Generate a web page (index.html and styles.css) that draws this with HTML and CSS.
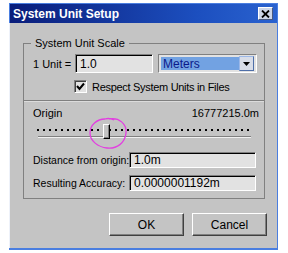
FILE: index.html
```html
<!DOCTYPE html>
<html lang="en">
<head>
    <meta charset="UTF-8">
    <title>System Unit Setup</title>
    <link rel="stylesheet" href="styles.css">
</head>
<body>

<div class="window">
    <div class="titlebar">
        <span class="title">System Unit Setup</span>
        <span class="close">
            <svg width="9" height="8" viewBox="0 0 9 8"><path d="M1 0.5 L8 7.5 M8 0.5 L1 7.5" stroke="#000" stroke-width="1.8"/></svg>
        </span>
    </div>

    <div class="content">
        <fieldset class="group">
            <legend>System Unit Scale</legend>

            <div class="unit-row">
                <span class="unit-label">1 Unit =</span>
                <div class="field unit-field">1.0</div>
                <div class="combo">
                    <span class="combo-value">Meters</span>
                    <span class="combo-arrow">
                        <svg width="7" height="4" viewBox="0 0 7 4"><polygon points="0,0 7,0 3.5,4" fill="#000"/></svg>
                    </span>
                </div>
            </div>

            <div class="check-row">
                <span class="checkbox">
                    <svg width="9" height="9" viewBox="0 0 9 9"><path d="M1 4 L3.5 7 L8 1.5" stroke="#000" stroke-width="2" fill="none"/></svg>
                </span>
                Respect System Units in Files
            </div>

            <div class="divider"></div>

            <div class="origin-row">
                <span>Origin</span>
                <span>16777215.0m</span>
            </div>

            <div class="slider">
                <div class="ticks"></div>
                <div class="track"></div>
                <div class="thumb" style="left: 66px;"></div>
            </div>

            <div class="value-row first">
                <span class="value-label">Distance from origin:</span>
                <div class="field value-field">1.0m</div>
            </div>
            <div class="value-row">
                <span class="value-label">Resulting Accuracy:</span>
                <div class="field value-field">0.0000001192m</div>
            </div>
        </fieldset>

        <div class="buttons">
            <button class="btn">OK</button>
            <button class="btn">Cancel</button>
        </div>
    </div>
</div>

<!-- hand drawn mark around the slider thumb -->
<svg class="mark" width="42" height="36" viewBox="0 0 42 36">
    <path d="M21 3 C31 1 39 8 38 17 C37 27 29 33 19 32 C10 31 2 25 2 17 C2 9 9 3 17 3 C20 2 24 3 26 4" stroke="#e23fe0" stroke-width="1.3" fill="none"/>
</svg>

</body>
</html>
```

FILE: styles.css
```css
body {
    margin: 0;
    background-color: #fff;
    font-family: "Liberation Sans", Arial, sans-serif;
    font-size: 11px;
    color: #000;
}

.window {
    margin: 3px 0 0 9px;
    width: 267px;
    border: 1px solid #4a7ee0;
    border-bottom-width: 2px;
    background-color: #c4c4c4;
}

.titlebar {
    height: 19px;
    display: flex;
    align-items: center;
    justify-content: space-between;
    padding: 0 4px 0 3px;
    background: linear-gradient(to right, #0a1d7a, #1c4fbf 70%, #2a62cf);
    color: white;
    font-size: 12px;
    font-weight: bold;
}

.close {
    width: 13px;
    height: 11px;
    display: flex;
    align-items: center;
    justify-content: center;
    background-color: #cdd6e8;
    border: 1px solid;
    border-color: #fff #4a5a80 #4a5a80 #fff;
}

.content {
    height: 225px;
    box-sizing: border-box;
    padding: 13px 12px 0 13px;
    border-left: 1px solid #eef2fa;
    margin-left: -1px;
}

/* Group box */
.group {
    margin: 0;
    width: 242px;
    box-sizing: border-box;
    padding: 4px 5px 7px 9px;
    border: 1px solid #808080;
}

.group legend {
    padding: 0 4px;
    margin-left: -2px;
    line-height: 14px;
}

.field {
    box-sizing: border-box;
    background-color: #e2e2e2;
    border: 1px solid;
    border-color: #808080 #fff #fff #808080;
    box-shadow: inset 1px 1px 0 #000;
    padding-left: 4px;
    display: flex;
    align-items: center;
    font-size: 12px;
}

.unit-row {
    display: flex;
    align-items: center;
    height: 19px;
}

.unit-label {
    width: 42px;
    white-space: nowrap;
}

.unit-field {
    width: 78px;
    height: 19px;
}

.combo {
    margin-left: 5px;
    width: 99px;
    height: 19px;
    box-sizing: border-box;
    display: flex;
    align-items: center;
    padding: 2px;
    background-color: #e2e2e2;
    border: 1px solid;
    border-color: #808080 #fff #fff #808080;
}

.combo-value {
    flex: 1;
    align-self: stretch;
    display: flex;
    align-items: center;
    padding-left: 2px;
    background-color: #72a2e2;
    color: #0c1a8a;
    font-size: 12px;
}

.combo-arrow {
    width: 13px;
    height: 13px;
    display: flex;
    align-items: center;
    justify-content: center;
    background-color: #d8dde8;
    border: 1px solid;
    border-color: #9cb8e8 #4f6fa8 #4f6fa8 #9cb8e8;
}

.check-row {
    display: flex;
    align-items: center;
    gap: 5px;
    margin-top: 7px;
    padding-left: 41px;
    height: 13px;
    white-space: nowrap;
    letter-spacing: -0.3px;
}

.checkbox {
    width: 13px;
    height: 13px;
    box-sizing: border-box;
    display: flex;
    align-items: center;
    justify-content: center;
    background-color: #e2e2e2;
    border: 1px solid;
    border-color: #808080 #fff #fff #808080;
    box-shadow: inset 1px 1px 0 #404040;
}

.divider {
    margin: 7px -5px 0 -9px;
    border-top: 1px solid #808080;
    border-bottom: 1px solid #dcdcdc;
}

.origin-row {
    display: flex;
    justify-content: space-between;
    margin-top: 4px;
    line-height: 14px;
}

/* Slider */
.slider {
    position: relative;
    margin: 2px 0 0 4px;
    width: 216px;
    height: 18px;
}

.ticks {
    position: relative;
    top: 7px;
    height: 2px;
    background: repeating-linear-gradient(to right, #000 0 2px, transparent 2px 6px);
}

.track {
    position: relative;
    top: 12px;
    margin: 0 2px 0 1px;
    border-top: 1px solid #808080;
    border-bottom: 1px solid #f0f0f0;
}

.thumb {
    position: absolute;
    top: 2px;
    width: 7px;
    height: 15px;
    box-sizing: border-box;
    background-color: #c4c4c4;
    border: 1px solid;
    border-color: #fff #000 #000 #fff;
    box-shadow: inset -1px -1px 0 #808080;
}

.value-row {
    display: flex;
    align-items: center;
    height: 16px;
    margin-top: 7px;
}

.value-row.first {
    margin-top: 12px;
}

.value-label {
    flex: none;
    width: 96px;
    white-space: nowrap;
    font-size: 10.5px;
}

.value-field {
    width: 127px;
    height: 16px;
}

/* Buttons */
.buttons {
    display: flex;
    justify-content: flex-end;
    gap: 8px;
    margin: 14px -2px 0 0;
}

.btn {
    width: 75px;
    height: 23px;
    padding: 0;
    font-family: "Liberation Sans", Arial, sans-serif;
    font-size: 12px;
    color: #000;
    background-color: #c4c4c4;
    border: 1px solid;
    border-color: #fff #404040 #404040 #fff;
    box-shadow: inset -1px -1px 0 #808080;
}

.mark {
    position: absolute;
    left: 88px;
    top: 116px;
}
```
